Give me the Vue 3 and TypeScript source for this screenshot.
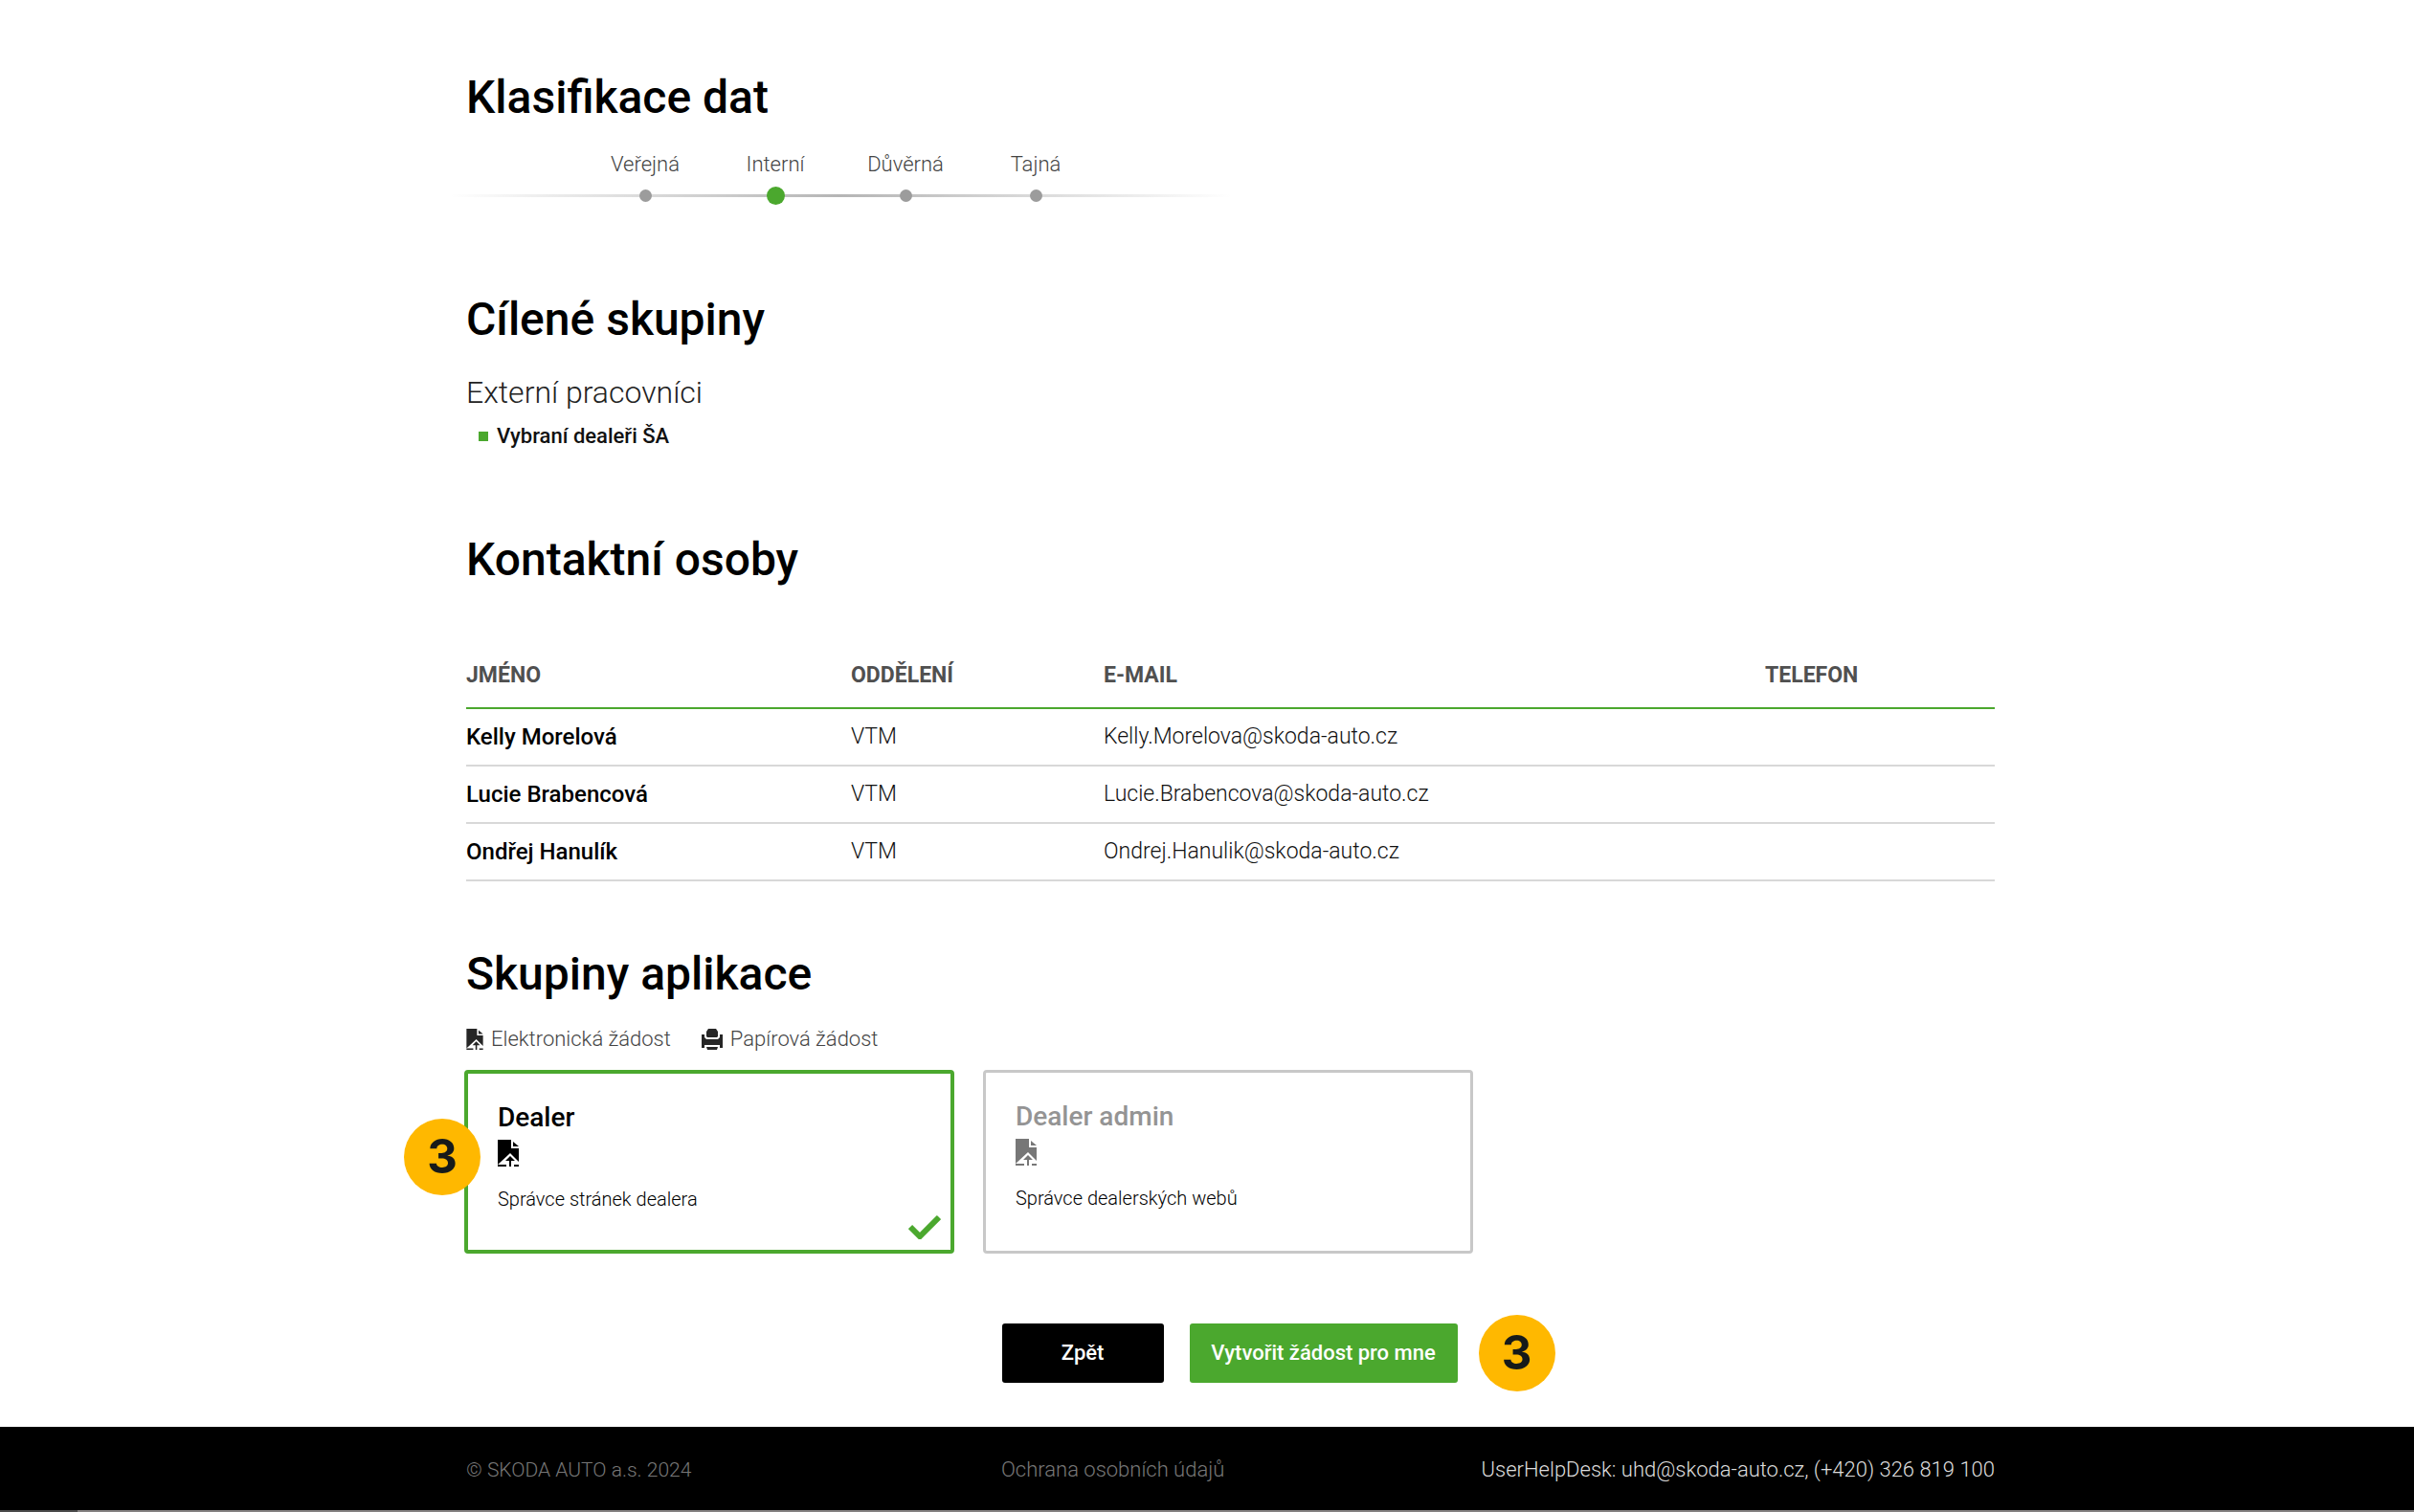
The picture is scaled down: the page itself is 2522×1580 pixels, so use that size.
<script setup lang="ts">
import { ref } from 'vue'

interface Contact {
  name: string
  department: string
  email: string
  phone: string
}

interface AppGroup {
  id: string
  title: string
  description: string
}

const levels: string[] = ['Veřejná', 'Interní', 'Důvěrná', 'Tajná']
const activeLevel = 'Interní'

const contacts: Contact[] = [
  { name: 'Kelly Morelová', department: 'VTM', email: 'Kelly.Morelova@skoda-auto.cz', phone: '' },
  { name: 'Lucie Brabencová', department: 'VTM', email: 'Lucie.Brabencova@skoda-auto.cz', phone: '' },
  { name: 'Ondřej Hanulík', department: 'VTM', email: 'Ondrej.Hanulik@skoda-auto.cz', phone: '' },
]

const groups: AppGroup[] = [
  { id: 'dealer', title: 'Dealer', description: 'Správce stránek dealera' },
  { id: 'admin', title: 'Dealer admin', description: 'Správce dealerských webů' },
]

const selected = ref('dealer')
</script>

<template>
  <div class="page">
    <main class="content">
      <section class="classification">
        <h2>Klasifikace dat</h2>
        <ol class="scale">
          <li v-for="level in levels" :key="level" :class="{ active: level === activeLevel }">
            <span class="label">{{ level }}</span>
            <span class="track"><span class="dot"></span></span>
          </li>
        </ol>
      </section>

      <section class="targets">
        <h2>Cílené skupiny</h2>
        <h3>Externí pracovníci</h3>
        <ul>
          <li>Vybraní dealeři ŠA</li>
        </ul>
      </section>

      <section class="contacts">
        <h2>Kontaktní osoby</h2>
        <table>
          <thead>
            <tr>
              <th class="col-name">JMÉNO</th>
              <th class="col-dept">ODDĚLENÍ</th>
              <th class="col-mail">E-MAIL</th>
              <th>TELEFON</th>
            </tr>
          </thead>
          <tbody>
            <tr v-for="c in contacts" :key="c.email">
              <td class="name">{{ c.name }}</td>
              <td>{{ c.department }}</td>
              <td>{{ c.email }}</td>
              <td>{{ c.phone }}</td>
            </tr>
          </tbody>
        </table>
      </section>

      <section class="groups">
        <h2>Skupiny aplikace</h2>
        <div class="legend">
          <span class="legend-item">
            <svg class="legend-doc" viewBox="0 0 22 28" aria-hidden="true">
              <path d="M0 0h14v9h8v14L13 14 0 26z" />
              <path d="M16 2l6 5h-6z" />
              <path d="M13 17l5 5h-4v6h-2v-6H8z" />
              <path d="M0 26h9v2H0zM17 26h5v2h-5z" />
            </svg>
            Elektronická žádost
          </span>
          <span class="legend-item">
            <svg class="legend-printer" viewBox="0 0 22 22" aria-hidden="true">
              <path d="M7 0h8l2 3v5l-1 1H6L5 8V3z" />
              <path d="M0 6h3v3l2 2h12l2-2V6h3v14h-3v-3H3v3H0z" />
              <path d="M5 19h12l-1 3H6z" />
            </svg>
            Papírová žádost
          </span>
        </div>
        <div class="cards">
          <button
            v-for="g in groups"
            :key="g.id"
            type="button"
            class="card"
            :class="{ selected: selected === g.id }"
            :aria-pressed="selected === g.id"
            @click="selected = g.id"
          >
            <span class="card-title">{{ g.title }}</span>
            <svg class="card-doc" viewBox="0 0 22 28" aria-hidden="true">
              <path d="M0 0h14v9h8v14L13 14 0 26z" />
              <path d="M16 2l6 5h-6z" />
              <path d="M13 17l5 5h-4v6h-2v-6H8z" />
              <path d="M0 26h9v2H0zM17 26h5v2h-5z" />
            </svg>
            <span class="card-text">{{ g.description }}</span>
            <svg v-if="selected === g.id" class="check" viewBox="0 0 34 26" aria-hidden="true">
              <path d="M2 13l10 10L32 3" fill="none" stroke="#4ba82e" stroke-width="6" />
            </svg>
          </button>
          <span class="step step-card">3</span>
        </div>
      </section>

      <div class="actions">
        <button type="button" class="btn back">Zpět</button>
        <button type="button" class="btn create">Vytvořit žádost pro mne</button>
        <span class="step">3</span>
      </div>
    </main>

    <footer>
      <div class="footer-row">
        <span class="copyright">© SKODA AUTO a.s. 2024</span>
        <a href="#">Ochrana osobních údajů</a>
        <span class="helpdesk">UserHelpDesk: uhd@skoda-auto.cz, (+420) 326 819 100</span>
      </div>
      <div class="edge"></div>
    </footer>
  </div>
</template>

<style>
body {
  margin: 0;
  background: #fff;
}
</style>

<style scoped>
.page {
  min-height: 100vh;
  display: flex;
  flex-direction: column;
  font-family: Roboto, "Noto Sans", sans-serif;
  font-weight: 300;
  font-size: 22px;
  line-height: 28px;
  color: #111;
}

.content {
  flex: 1;
  padding: 70px 438px 0 487px;
}

h2 {
  margin: 0;
  font-size: 48px;
  line-height: 64px;
  font-weight: 500;
  color: #000;
}

h3 {
  margin: 0;
  font-size: 32px;
  line-height: 40px;
  font-weight: 300;
  color: #222;
}

ul,
ol {
  margin: 0;
  padding: 0;
  list-style: none;
}

.scale {
  display: flex;
  width: 544px;
  margin: 24px 0 0 -17px;
  padding: 0 136px;
  background: linear-gradient(90deg, transparent, #b5b5b5 50%, transparent) left 0 bottom 8px / 100% 3px no-repeat;
  color: #444;
}

.scale li {
  flex: 1;
  display: flex;
  flex-direction: column;
  align-items: center;
}

.label {
  margin-bottom: 8px;
}

.track {
  height: 20px;
  display: flex;
  align-items: center;
}

.dot {
  width: 13px;
  height: 13px;
  border-radius: 50%;
  background: #9c9c9c;
}

.active .dot {
  width: 19px;
  height: 19px;
  background: #4ba82e;
}

.targets {
  margin-top: 88px;
}

.targets h3 {
  margin-top: 24px;
}

.targets li {
  display: flex;
  align-items: center;
  gap: 9px;
  margin: 12px 0 0 13px;
  font-weight: 500;
}

.targets li::before {
  content: "";
  width: 10px;
  height: 10px;
  background: #4ba82e;
}

.contacts {
  margin-top: 83px;
}

table {
  width: 100%;
  margin-top: 56px;
  border-collapse: collapse;
  table-layout: fixed;
}

th,
td {
  padding: 0;
  height: 58px;
  font-size: 23px;
  text-align: left;
}

th {
  font-weight: 700;
  color: #505050;
  height: 66px;
  border-bottom: 2px solid #4ba82e;
}

td {
  border-bottom: 2px solid #d8d8d8;
}

.name {
  font-size: 24px;
  font-weight: 500;
  color: #000;
}

.col-name {
  width: 402px;
}

.col-dept {
  width: 264px;
}

.col-mail {
  width: 691px;
}

.groups {
  margin-top: 65px;
}

.legend {
  display: flex;
  gap: 32px;
  margin-top: 22px;
  color: #444;
}

.legend-item {
  display: flex;
  align-items: center;
  gap: 8px;
}

.legend svg {
  height: 22px;
  fill: #262626;
}

.legend-doc {
  width: 18px;
}

.legend-printer {
  width: 22px;
}

.cards {
  position: relative;
  display: flex;
  gap: 30px;
  margin: 18px 0 0 -2px;
}

.card {
  position: relative;
  box-sizing: border-box;
  width: 512px;
  height: 192px;
  padding: 30px 31px;
  display: flex;
  flex-direction: column;
  align-items: flex-start;
  border: 3px solid #c8c8c8;
  border-radius: 4px;
  background: #fff;
  font: inherit;
  text-align: left;
  color: #000;
  cursor: pointer;
}

.card.selected {
  border: 4px solid #4ba82e;
}

.card-title {
  font-size: 28px;
  line-height: 32px;
  font-weight: 500;
  color: #949494;
}

.card-doc {
  width: 22px;
  height: 28px;
  margin: 7px 0 20px;
  fill: #777;
}

.selected .card-title {
  color: #000;
}

.selected .card-doc {
  fill: #000;
}

.card-text {
  font-size: 20px;
}

.check {
  position: absolute;
  right: 10px;
  bottom: 11px;
  width: 34px;
  height: 26px;
}

.step {
  width: 80px;
  height: 80px;
  border-radius: 50%;
  background: #ffb800;
  color: #161a1a;
  font: 700 49px/80px Inter, sans-serif;
  text-align: center;
}

.step-card {
  position: absolute;
  left: -63px;
  top: 51px;
}

.actions {
  display: flex;
  align-items: center;
  justify-content: center;
  padding: 64px 0 37px 100px;
}

.btn {
  height: 62px;
  padding: 0;
  border: 0;
  border-radius: 3px;
  font: inherit;
  font-weight: 500;
  color: #fff;
  cursor: pointer;
}

.back {
  width: 169px;
  margin-right: 27px;
  background: #000;
}

.create {
  width: 280px;
  margin-right: 22px;
  background: #4ba82e;
}

footer {
  background: #000;
  color: #777;
}

.footer-row {
  display: grid;
  grid-template-columns: 35% 1fr auto;
  align-items: center;
  height: 85px;
  padding: 2px 438px 0 487px;
}

.copyright {
  font-size: 21px;
}

footer a {
  color: inherit;
  text-decoration: none;
}

.helpdesk {
  color: #ddd;
}

.edge {
  height: 2px;
  background: linear-gradient(90deg, #4c4c4c 81px, #858282 81px);
}
</style>
